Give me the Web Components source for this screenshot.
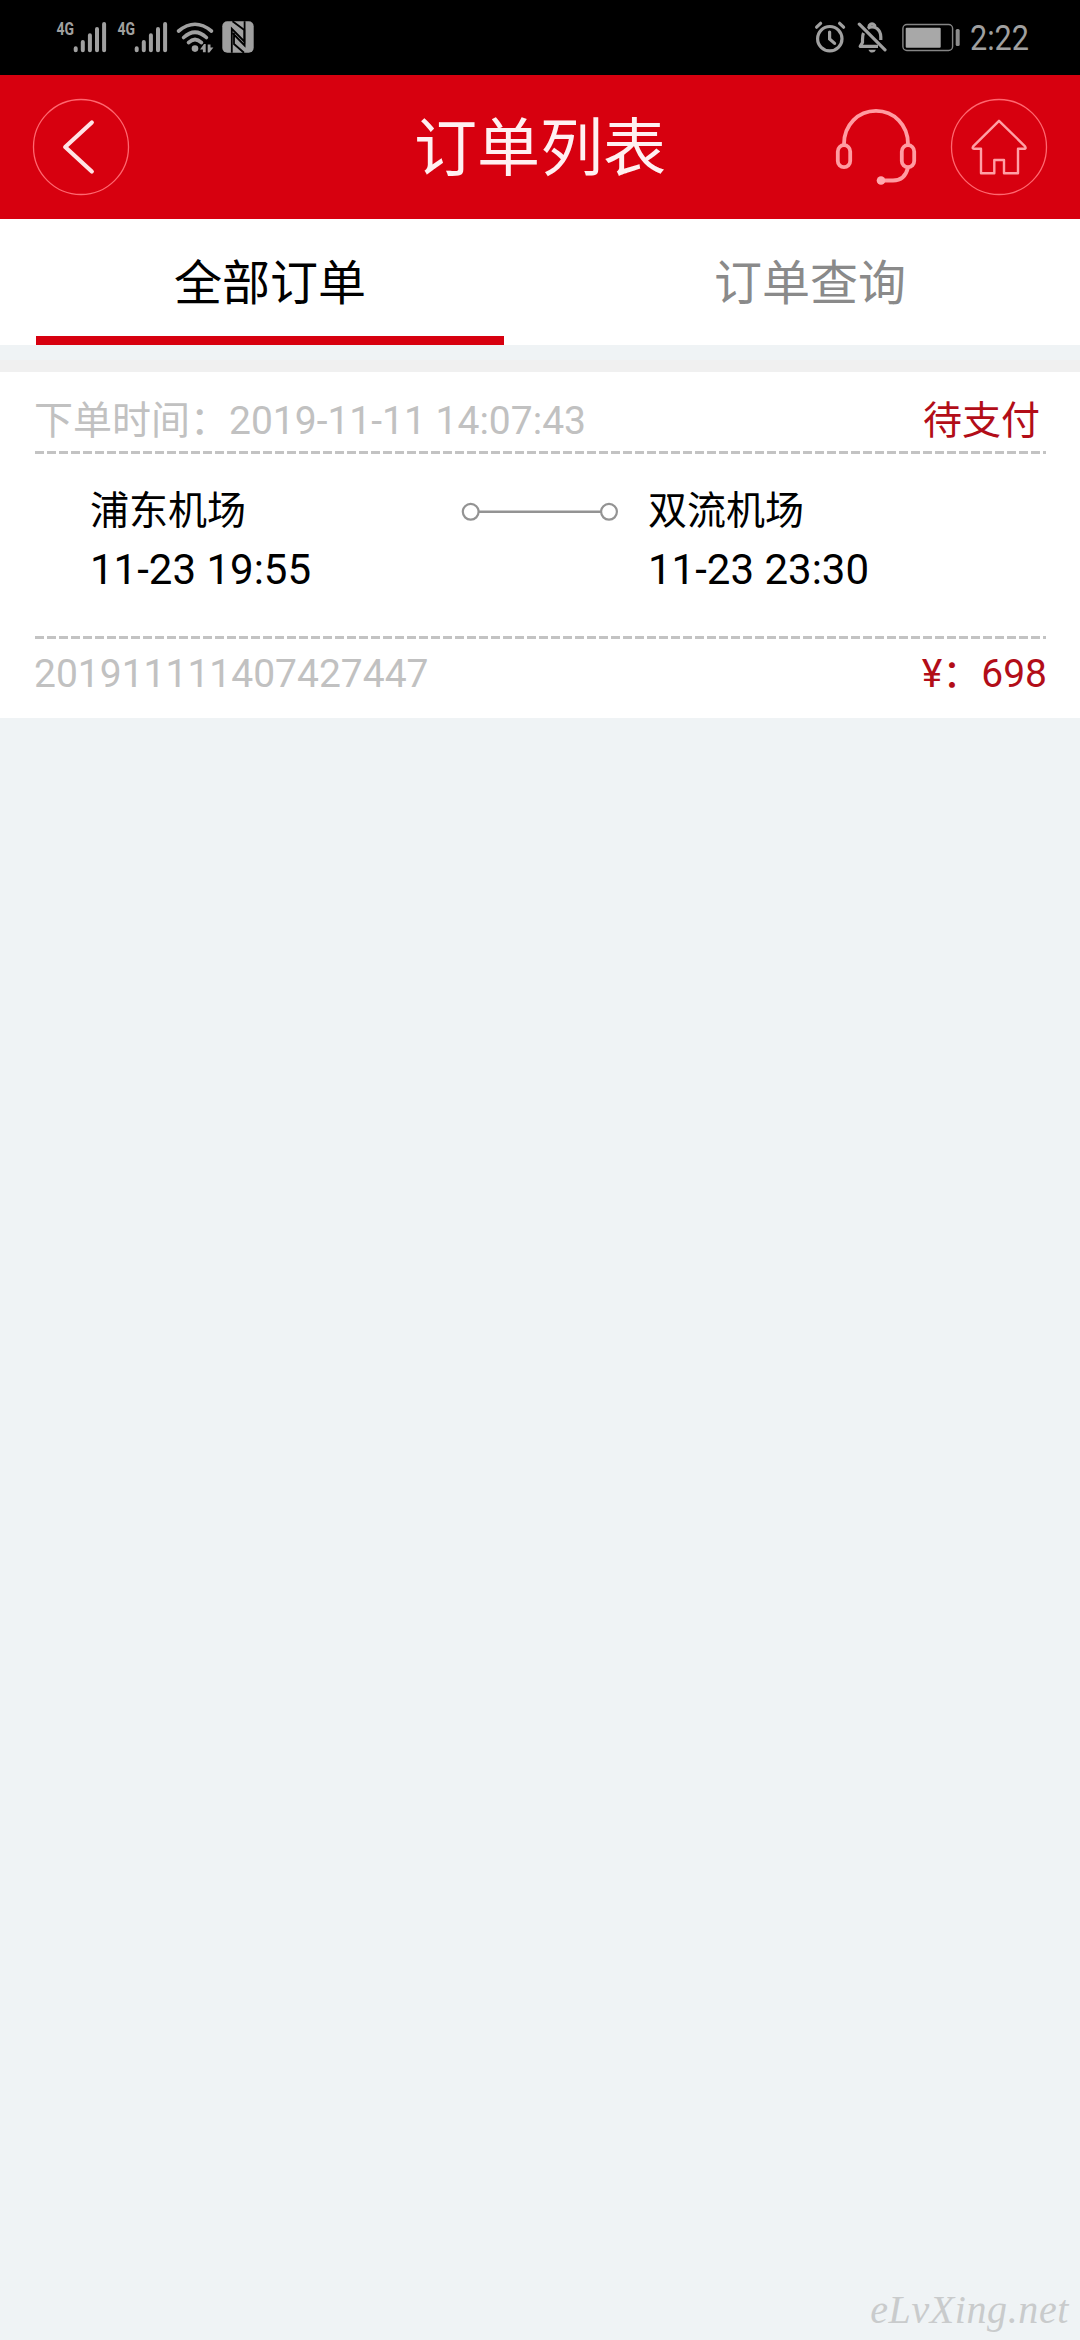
<!DOCTYPE html>
<html lang="zh-CN">
<head>
<meta charset="utf-8">
<title>订单列表</title>
<style>
  html, body {
    margin: 0;
    height: 100%;
  }
  body {
    background: #eff3f5;
    font-family: Roboto, "Noto Sans CJK SC", sans-serif;
  }
</style>
</head>
<body>
<order-page></order-page>

<script>
// small helper, every element here clones its markup into an open root
const define = (name, html) => {
  const template = document.createElement('template');
  template.innerHTML = html;
  customElements.define(name, class extends HTMLElement {
    constructor() {
      super();
      this.attachShadow({ mode: 'open' }).appendChild(template.content.cloneNode(true));
    }
  });
};

// icons: [viewBox, markup]
const ICONS = {
  signal: ['56 20 52 34', `
    <text x="56.5" y="35.3" font-size="18.5" font-weight="700" fill="#a0a0a0" textLength="17.5" lengthAdjust="spacingAndGlyphs">4G</text>
    <g stroke="#a0a0a0" stroke-width="4" stroke-linecap="round">
      <path d="M75.7 48.3v2M82.8 42v8.3M89.9 35.2v15.1M97 29v21.3M104.1 24v26.3"/>
    </g>`],
  wifi: ['176 20 38 34', `
    <g fill="none" stroke="#a0a0a0" stroke-width="3.6" stroke-linecap="round">
      <path d="M178.6 31Q195 17.500 211.400 31"/>
      <path d="M183.600 37.500Q195 27 206.400 37.500"/>
      <path d="M188.500 42.600Q195 36.400 201.500 42.600"/>
    </g>
    <circle cx="195" cy="48.600" r="3.300" fill="#a0a0a0"/>
    <path d="M200 49.500l4-5.500h1.700v8.300h-2.800v-2.800zM213.400 47.500l-4 5h-1.700v-8h2.800v3z" fill="#a0a0a0"/>`],
  nfc: ['222 20 32 34', `
    <rect x="222.300" y="21.300" width="31.400" height="31.400" rx="5" fill="#a0a0a0"/>
    <path d="M232.500 52.700V30.500L244.800 43.500V21.300" fill="none"/>
    <path d="M231.800 52.700V28.800L244.300 41.500V30L232.500 21.300" fill="none" stroke="#000" stroke-width="1.800"/>
    <path d="M244.600 21.300V45.500L232.500 33M234 33V44L244 52.700" fill="none" stroke="#000" stroke-width="1.800"/>`],
  alarm: ['814 20 32 34', `
    <g fill="none" stroke="#a0a0a0" stroke-width="3.200" stroke-linecap="round">
      <circle cx="829.800" cy="38.700" r="12.200"/>
      <path d="M829.600 32v7l5 4.400M816.600 27.200l4-3.900M839.600 23.300l4 3.900"/>
    </g>`],
  mute: ['857 20 30 34', `
    <g fill="none" stroke="#a0a0a0" stroke-width="3.200" stroke-linejoin="round">
      <path d="M863.500 33Q862.500 35 862.500 40V42.500L860.200 46.300H878"/>
      <path d="M867.800 28.300Q872 25.500 877 28.500Q880.800 31.500 880.800 37V40"/>
      <path d="M869.300 27v-1.500q2.700-3.500 5.400 0v1.500"/>
      <path d="M859.300 24.200L885 49.800" stroke-linecap="round"/>
    </g>
    <path d="M868.500 49.800h7.500q-1 2.800-3.800 2.800t-3.700-2.800z" fill="#a0a0a0"/>`],
  battery: ['902 20 58 34', `
    <rect x="902.900" y="24.500" width="49.700" height="26" rx="4" fill="none" stroke="#858585" stroke-width="1.400"/>
    <rect x="905.700" y="27.700" width="35" height="20" rx="1" fill="#a8a8a8"/>
    <rect x="955.700" y="29" width="4" height="17" rx="1.500" fill="#8c8c8c"/>`],
  clock: ['970 20 60 34', `
    <text x="970" y="50.200" font-size="35.500" fill="#a0a0a0" textLength="59" lengthAdjust="spacingAndGlyphs">2:22</text>`],
  back: ['32 98 98 98', `
    <circle cx="81" cy="147" r="47.500" fill="none" stroke="#ff6770" stroke-width="1.300"/>
    <path d="M91.800 122.500L65.200 147L91.800 171.500" fill="none" stroke="#ffe3e5" stroke-width="4.200" stroke-linecap="round" stroke-linejoin="round"/>`],
  headset: ['835 107 82 80', `
    <g fill="none" stroke="#ff9ca2" stroke-width="3.800">
      <path d="M844 144C844 125 858 110.900 876 110.900S908 125 908 144"/>
      <rect x="837.800" y="145.200" width="12.400" height="22" rx="6.200"/>
      <rect x="901.800" y="145.200" width="12.400" height="22" rx="6.200"/>
      <path d="M908 167.500C906 176 901 180.500 893 180.500H881"/>
    </g>
    <circle cx="881" cy="180.500" r="4.300" fill="#ffa9ae"/>`],
  home: ['950 98 98 98', `
    <circle cx="999" cy="147" r="47.500" fill="none" stroke="#ff6770" stroke-width="1.300"/>
    <path d="M999 120.800L973.200 146.300Q971.800 148.800 974 148.800H981V173.300H994.300V160H1004V173.300H1018V148.800H1024.300Q1026.500 148.800 1025 146.300Z" fill="none" stroke="#ffa0a6" stroke-width="2.400" stroke-linejoin="round"/>`],
  route: ['461 501 158 22', `
    <g fill="#fff" stroke="#939393">
      <path d="M478 511.800H602" stroke-width="2.600"/>
      <circle cx="470.700" cy="511.800" r="7.900" stroke-width="2.200"/>
      <circle cx="609" cy="511.800" r="7.900" stroke-width="2.200"/>
    </g>`],
};

class UiIcon extends HTMLElement {
  constructor() {
    super();
    this.attachShadow({ mode: 'open' });
  }

  connectedCallback() {
    const [box, body] = ICONS[this.getAttribute('name')];
    const [, , w, h] = box.split(' ');
    this.shadowRoot.innerHTML = `
      <style>
        :host { display: block; flex: none; }
        svg { display: block; font-family: Roboto, sans-serif; }
      </style>
      <svg width="${w}" height="${h}" viewBox="${box}">${body}</svg>
    `;
  }
}
customElements.define('ui-icon', UiIcon);

define('status-bar', `
  <style>
    :host {
      display: flex;
      justify-content: space-between;
      box-sizing: border-box;
      height: 75px;
      padding: 20px 50px 0 56px;
      background: #000;
    }
    div { display: flex; }
    .left { gap: 9px; }
    .left ui-icon:nth-child(3) { margin-left: -2px; }
    .left ui-icon:nth-child(4) { margin-left: -1px; }
    .right { gap: 10px; }
    .right ui-icon:nth-child(2) { margin-left: 1px; }
    .right ui-icon:nth-child(3) { margin-left: 5px; }
  </style>
  <div class="left">
    <ui-icon name="signal"></ui-icon>
    <ui-icon name="signal"></ui-icon>
    <ui-icon name="wifi"></ui-icon>
    <ui-icon name="nfc"></ui-icon>
  </div>
  <div class="right">
    <ui-icon name="alarm"></ui-icon>
    <ui-icon name="mute"></ui-icon>
    <ui-icon name="battery"></ui-icon>
    <ui-icon name="clock"></ui-icon>
  </div>
`);

define('nav-bar', `
  <style>
    :host {
      display: grid;
      grid-template-columns: 1fr auto 1fr;
      align-items: center;
      box-sizing: border-box;
      height: 144px;
      padding: 0 32px;
      background: #d7000f;
      color: #fff0f1;
    }
    .title {
      font-size: 63px;
      line-height: 80px;
      padding-top: 4px;
    }
    .actions {
      display: flex;
      align-items: center;
      justify-content: flex-end;
      gap: 33px;
    }
  </style>
  <ui-icon name="back"></ui-icon>
  <div class="title"><slot></slot></div>
  <div class="actions">
    <ui-icon name="headset"></ui-icon>
    <ui-icon name="home"></ui-icon>
  </div>
`);

define('tab-item', `
  <style>
    :host {
      display: block;
      flex: 1;
      box-sizing: border-box;
      margin: 0 36px;
      height: 126px;
      font-size: 48px;
      line-height: 130px;
      text-align: center;
      color: #8a8a8a;
    }
    :host([active]) {
      color: #000;
      border-bottom: 9px solid #d7000f;
    }
  </style>
  <slot></slot>
`);

define('tab-bar', `
  <style>
    :host {
      display: flex;
      background: #fff;
      height: 126px;
      margin-bottom: 15px;
    }
  </style>
  <slot></slot>
`);

define('order-card', `
  <style>
    :host {
      display: block;
      box-sizing: border-box;
      height: 358px;
      border-top: 12px solid #f0f0f0;
      padding: 0 34px;
      background: #fff;
      font-size: 39px;
    }
    .row {
      display: flex;
      justify-content: space-between;
      color: #c1c1c1;
    }
    .head { height: 79px; line-height: 98px; }
    .foot { height: 79px; line-height: 71px; }
    .red { color: #b20d18; }
    .head .red { margin-right: 6px; }
    .foot .red { margin-right: -1px; }
    .dash {
      height: 3px;
      margin: 0 0 0 1px;
      background: repeating-linear-gradient(90deg, #c3c3c3 0 9px, transparent 9px 12px);
    }
    .trip {
      display: grid;
      grid-template-columns: 371px 187px 1fr;
      height: 182px;
      padding-left: 56px;
      box-sizing: border-box;
      color: #000;
    }
    ui-icon { margin-top: 47px; }
  </style>
  <div class="row head">
    <slot name="created"></slot>
    <span class="red"><slot name="status"></slot></span>
  </div>
  <div class="dash"></div>
  <div class="trip">
    <slot name="from"></slot>
    <ui-icon name="route"></ui-icon>
    <slot name="to"></slot>
  </div>
  <div class="dash"></div>
  <div class="row foot">
    <slot name="number"></slot>
    <span class="red"><slot name="price"></slot></span>
  </div>
`);

define('trip-stop', `
  <style>
    :host { display: block; padding-top: 28px; }
    .place { line-height: 58px; }
    .time { font-size: 42px; line-height: 60px; }
  </style>
  <div class="place"><slot></slot></div>
  <div class="time"><slot name="time"></slot></div>
`);

define('water-mark', `
  <style>
    :host {
      display: block;
      margin-top: auto;
      padding: 0 11px 8px 0;
      text-align: right;
      font: italic 40px/44px "Liberation Serif", serif;
      letter-spacing: 0.6px;
      color: #c9cbcc;
    }
  </style>
  <slot></slot>
`);

define('order-page', `
  <style>
    :host {
      display: flex;
      flex-direction: column;
      width: 1080px;
      height: 2340px;
      overflow: hidden;
    }
  </style>
  <status-bar></status-bar>
  <nav-bar>订单列表</nav-bar>
  <tab-bar>
    <tab-item active>全部订单</tab-item>
    <tab-item>订单查询</tab-item>
  </tab-bar>
  <order-card>
    <span slot="created">下单时间：2019-11-11 14:07:43</span>
    <span slot="status">待支付</span>
    <trip-stop slot="from">浦东机场<span slot="time">11-23 19:55</span></trip-stop>
    <trip-stop slot="to">双流机场<span slot="time">11-23 23:30</span></trip-stop>
    <span slot="number">201911111407427447</span>
    <span slot="price">¥：698</span>
  </order-card>
  <water-mark>eLvXing.net</water-mark>
`);
</script>
</body>
</html>
